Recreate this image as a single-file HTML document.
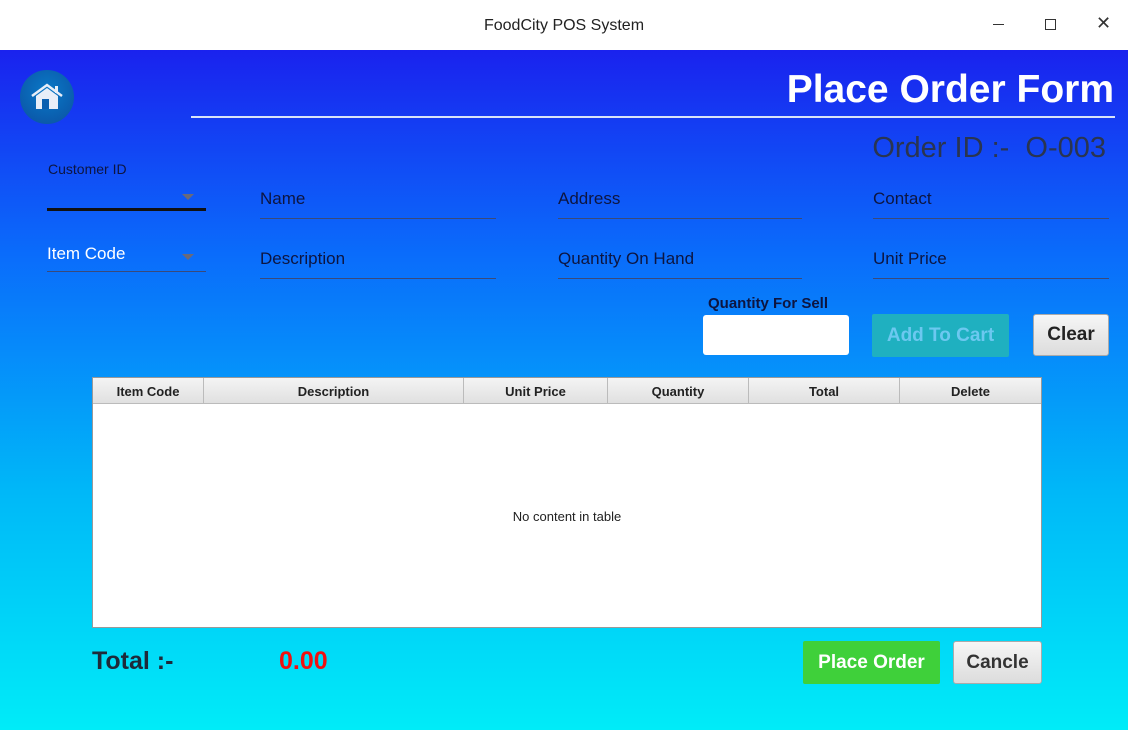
<!DOCTYPE html>
<html><head><style>
*{margin:0;padding:0;box-sizing:border-box}
body{width:1128px;height:730px;overflow:hidden;font-family:"Liberation Sans",sans-serif;background:#fff;position:relative}
.tb{position:absolute;left:0;top:0;width:1128px;height:50px;background:#fff;text-align:center;font-size:16px;line-height:52px;color:#222}
.main{position:absolute;left:0;top:50px;width:1128px;height:680px;background:linear-gradient(#1a22ee 0%,#0a6cfb 30%,#00b8f8 65%,#00ecf8 100%)}
.a{position:absolute}
.fld{position:absolute;border-bottom:1px solid #3a4a7a;font-size:17px;color:#0d1540}
.hdr{position:absolute;top:0;height:26px;border-right:1px solid #bbb;font-size:13px;font-weight:bold;color:#222;text-align:center;line-height:27px}
.arr{position:absolute;width:0;height:0;border-left:6px solid transparent;border-right:6px solid transparent;border-top:6px solid #6a6a7a}
</style></head><body>
<div class="tb">FoodCity POS System</div>
<div class="a" style="left:993px;top:24px;width:11px;height:1px;background:#333"></div>
<div class="a" style="left:1045px;top:19px;width:11px;height:11px;border:1px solid #333"></div>
<div class="a" style="left:1096px;top:13px;font-size:18px;color:#333">✕</div>
<div class="main">
<div class="a" style="left:20px;top:20px;width:54px;height:54px;border-radius:50%;background:radial-gradient(circle at 50% 40%,#0a7ac8,#0b4fa0)"></div>
<svg class="a" style="left:30px;top:32px" width="34" height="30" viewBox="0 0 34 30"><path d="M2 14 L17 3 L32 14" stroke="#e8eef8" stroke-width="2.5" fill="none"/><rect x="25" y="4" width="3" height="7" fill="#e8eef8"/><path d="M6 14 L17 6 L28 14 L28 27 L6 27Z" fill="#e8eef8"/><rect x="12" y="17" width="7" height="10" fill="#0a5fb0"/></svg>
<div class="a" style="right:14px;top:18px;font-size:39px;font-weight:bold;color:#fff">Place Order Form</div>
<div class="a" style="left:191px;top:66px;width:924px;height:2px;background:#d8e4f8"></div>
<div class="a" style="right:22px;top:82px;font-size:29px;color:#2a3550">Order ID :-&nbsp; O-003</div>
<div class="a" style="left:48px;top:111px;font-size:14px;color:#0d1540">Customer ID</div>
<div class="a" style="left:47px;top:158px;width:159px;height:3px;background:#111"></div>
<div class="arr" style="left:182px;top:144px"></div>
<div class="fld" style="left:47px;top:194px;width:159px;height:28px;color:#fff">Item Code</div>
<div class="arr" style="left:182px;top:204px"></div>
<div class="fld" style="left:260px;top:139px;width:236px;height:30px">Name</div>
<div class="fld" style="left:558px;top:139px;width:244px;height:30px">Address</div>
<div class="fld" style="left:873px;top:139px;width:236px;height:30px">Contact</div>
<div class="fld" style="left:260px;top:199px;width:236px;height:30px">Description</div>
<div class="fld" style="left:558px;top:199px;width:244px;height:30px">Quantity On Hand</div>
<div class="fld" style="left:873px;top:199px;width:236px;height:30px">Unit Price</div>
<div class="a" style="left:708px;top:245px;font-size:15px;font-weight:bold;color:#0d1540">Quantity For Sell</div>
<div class="a" style="left:703px;top:265px;width:146px;height:40px;background:#fff;border-radius:3px"></div>
<div class="a" style="left:872px;top:264px;width:137px;height:43px;background:#1fb0c0;border-radius:2px;color:#6cc8f0;font-size:19px;font-weight:bold;text-align:center;line-height:43px">Add To Cart</div>
<div class="a" style="left:1033px;top:264px;width:76px;height:42px;background:linear-gradient(#f6f6f6,#dcdcdc);border:1px solid #aaa;border-radius:3px;color:#222;font-size:19px;font-weight:bold;text-align:center;line-height:40px">Clear</div>
<div class="a" style="left:92px;top:327px;width:950px;height:251px;background:#fff;border:1px solid #999">
<div class="a" style="left:0;top:0;width:948px;height:26px;background:linear-gradient(#f4f4f4,#e0e0e0);border-bottom:1px solid #bbb"></div>
<div class="hdr" style="left:0;width:111px">Item Code</div>
<div class="hdr" style="left:111px;width:260px">Description</div>
<div class="hdr" style="left:371px;width:144px">Unit Price</div>
<div class="hdr" style="left:515px;width:141px">Quantity</div>
<div class="hdr" style="left:656px;width:151px">Total</div>
<div class="hdr" style="left:807px;width:141px;border-right:none">Delete</div>
<div class="a" style="left:0;top:131px;width:948px;text-align:center;font-size:13px;color:#222">No content in table</div>
</div>
<div class="a" style="left:92px;top:597px;font-size:25px;font-weight:bold;color:#1e2a3a">Total :-</div>
<div class="a" style="left:279px;top:597px;font-size:25px;font-weight:bold;color:#f01010">0.00</div>
<div class="a" style="left:803px;top:591px;width:137px;height:43px;background:#3fd03a;border-radius:2px;color:#fff;font-size:19px;font-weight:bold;text-align:center;line-height:43px">Place Order</div>
<div class="a" style="left:953px;top:591px;width:89px;height:43px;background:linear-gradient(#f6f6f6,#dcdcdc);border:1px solid #aaa;border-radius:3px;color:#333;font-size:19px;font-weight:bold;text-align:center;line-height:41px">Cancle</div>
</div>
</body></html>
